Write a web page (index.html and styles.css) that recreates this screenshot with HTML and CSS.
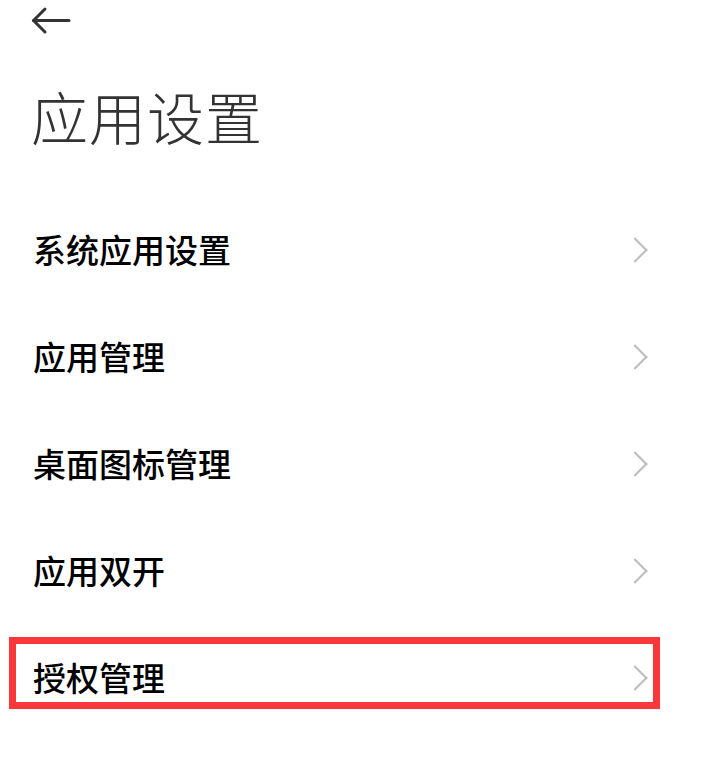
FILE: index.html
```html
<!DOCTYPE html>
<html lang="zh-CN">
<head>
    <meta charset="UTF-8">
    <meta name="viewport" content="width=device-width, initial-scale=1.0">
    <title>应用设置</title>
    <link rel="stylesheet" href="styles.css">
</head>
<body>
    <header class="topbar">
        <a class="back" href="#">
            <svg width="40" height="30" viewBox="0 0 40 30">
                <path d="M2.5 14.5 H38" fill="none" stroke="#333" stroke-width="3" stroke-linecap="round"/>
                <path d="M14 3 L2.5 14.5 L14 26" fill="none" stroke="#333" stroke-width="3" stroke-linecap="round" stroke-linejoin="round"/>
            </svg>
        </a>
    </header>

    <h1 class="page-title">应用设置</h1>

    <ul class="settings-list">
        <li class="item"><span>系统应用设置</span><i class="chevron"></i></li>
        <li class="item"><span>应用管理</span><i class="chevron"></i></li>
        <li class="item"><span>桌面图标管理</span><i class="chevron"></i></li>
        <li class="item"><span>应用双开</span><i class="chevron"></i></li>
        <li class="item marked"><span>授权管理</span><i class="chevron"></i></li>
    </ul>
</body>
</html>
```

FILE: styles.css
```css
body {
    margin: 0;
    padding: 0;
    background-color: #ffffff;
    font-family: "Noto Sans CJK SC", "Noto Sans", sans-serif;
    color: #000;
}

.topbar {
    height: 42px;
    padding-left: 31px;
    display: flex;
    align-items: center;
}

.back {
    display: block;
    width: 40px;
    height: 30px;
}

.back svg {
    display: block;
}

.page-title {
    margin: 33px 0 0 0;
    padding-left: 31px;
    height: 80px;
    line-height: 80px;
    font-size: 57px;
    font-weight: 300;
    color: #333;
    letter-spacing: 1px;
}

.settings-list {
    list-style: none;
    margin: 0;
    padding: 41px 0 0 0;
}

.item {
    position: relative;
    height: 107px;
    display: flex;
    align-items: center;
    justify-content: space-between;
    padding: 0 58px 0 33px;
    font-size: 33px;
    font-weight: 500;
    line-height: 1;
}

.chevron {
    display: block;
    width: 18px;
    height: 18px;
    border-top: 2px solid #bdbdbd;
    border-right: 2px solid #bdbdbd;
    transform: rotate(45deg);
    box-sizing: border-box;
}

.item.marked::after {
    content: '';
    position: absolute;
    left: 9px;
    right: 42px;
    top: 13px;
    bottom: 22px;
    border: 7px solid #fa383c;
}
```
